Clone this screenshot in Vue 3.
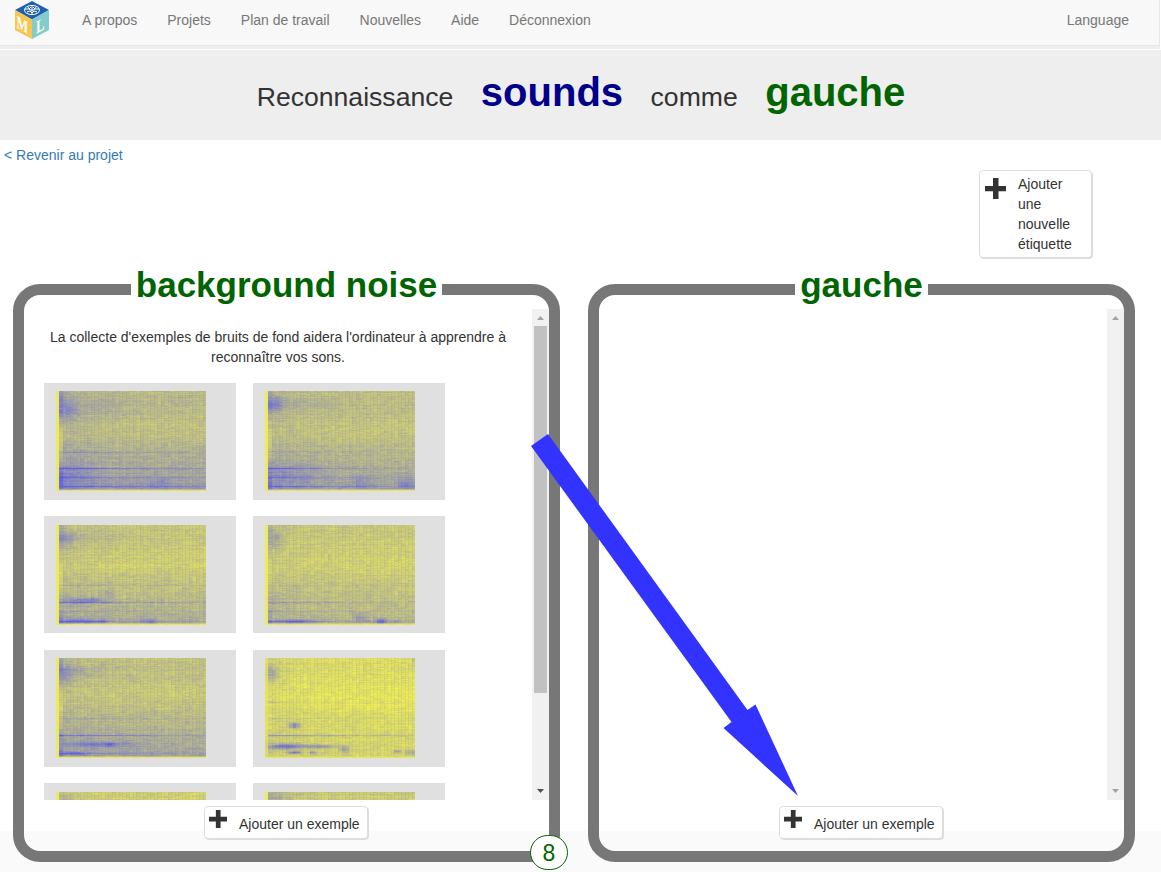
<script setup>
import { onMounted, ref } from 'vue'

const navItems = ['A propos', 'Projets', 'Plan de travail', 'Nouvelles', 'Aide', 'Déconnexion']

// lines: [row, strength, reach]; blobs: [x, y, radiusX, radiusY, strength]
const samples = [
  { seed: 11, base: 0.34, low: 0.24, edge: 0.5, lines: [[61, 0.17, 150], [77, 0.45, 110], [86, 0.22, 130], [95, 0.33, 200]], blobs: [[9, 17, 8, 12, 0.22], [30, 18, 42, 11, 0.08], [10, 85, 26, 12, 0.14], [103, 92, 9, 5, 0.16]] },
  { seed: 23, base: 0.31, low: 0.21, edge: 0.4, lines: [[60, 0.16, 100], [77, 0.43, 85], [86, 0.22, 70], [95, 0.34, 100]], blobs: [[8, 13, 8, 7, 0.32], [40, 13, 40, 6, 0.1], [20, 84, 30, 12, 0.12], [94, 91, 10, 6, 0.15], [139, 93, 10, 5, 0.22]] },
  { seed: 37, base: 0.25, low: 0.19, edge: 0.28, lines: [[60, 0.12, 150], [77, 0.3, 130], [86, 0.12, 80], [96, 0.3, 100]], blobs: [[8, 13, 8, 9, 0.2], [25, 12, 35, 5, 0.1], [28, 75, 22, 3, 0.34], [50, 68, 5, 3, 0.2], [22, 96, 18, 2.5, 0.3], [45, 96, 5, 2, 0.22], [93, 96, 7, 2.5, 0.32]] },
  { seed: 41, base: 0.23, low: 0.16, edge: 0.25, lines: [[60, 0.08, 110], [77, 0.28, 120], [86, 0.13, 80], [96, 0.25, 100]], blobs: [[8, 14, 7, 9, 0.17], [28, 96, 20, 2, 0.34], [93, 93, 7, 5, 0.2], [114, 96, 6, 3, 0.45], [130, 96, 5, 2, 0.2]] },
  { seed: 59, base: 0.29, low: 0.23, edge: 0.4, lines: [[60, 0.15, 160], [77, 0.38, 130], [95, 0.22, 100]], blobs: [[8, 15, 8, 9, 0.2], [20, 13, 30, 5, 0.1], [40, 86, 30, 2.5, 0.3], [52, 86, 5, 2, 0.22], [17, 95, 12, 2, 0.22]] },
  { seed: 67, base: 0.11, low: 0.07, edge: 0.1, lines: [[44, 0.16, 18], [60, 0.13, 70], [77, 0.36, 180]], blobs: [[6, 15, 6, 8, 0.28], [28, 67, 5, 3, 0.55], [18, 88, 16, 3, 0.6], [52, 88, 20, 2, 0.4], [28, 94, 6, 1.5, 0.55], [46, 94, 4, 1.5, 0.4], [78, 91, 4, 4, 0.35], [130, 93, 3, 1.5, 0.45], [144, 94, 6, 3, 0.3], [149, 1, 3, 7, 0.3]] },
  { seed: 73, base: 0.2, low: 0.2, edge: 0.25, lines: [], blobs: [[8, 8, 8, 6, 0.15]] },
  { seed: 89, base: 0.22, low: 0.2, edge: 0.28, lines: [], blobs: [[10, 5, 12, 6, 0.14]] }
]

const panels = [
  { name: 'background noise', hint: "La collecte d'exemples de bruits de fond aidera l'ordinateur à apprendre à reconnaître vos sons.", samples, count: 8 },
  { name: 'gauche', samples: [] }
]

const canvases = ref([])

function randomFrom(seed) {
  let s = seed * 7919
  return () => {
    s = (s + 0x6d2b79f5) | 0
    let t = Math.imul(s ^ (s >>> 15), 1 | s)
    t = (t + Math.imul(t ^ (t >>> 7), 61 | t)) ^ t
    return ((t ^ (t >>> 14)) >>> 0) / 4294967296
  }
}

function drawSpectrogram(canvas, s) {
  const ctx = canvas.getContext('2d')
  const rand = randomFrom(s.seed)
  const rowNoise = Array.from({ length: 100 }, () => rand() - 0.5)
  const columnDrift = new Array(100).fill(0)
  const cols = 43
  const w = 150 / cols
  for (let c = 0; c < cols; c++) {
    const x = c * w
    const left = Math.round(x)
    const width = Math.round(x + w) - left
    let vertical = 0
    for (let y = 0; y < 100; y++) {
      vertical = vertical * 0.6 + (rand() - 0.5) * 0.07
      columnDrift[y] = columnDrift[y] * 0.3 + (rand() - 0.5) * 0.1
      let v = s.base + columnDrift[y] + vertical + rowNoise[y] * 0.05
      v += s.low * Math.pow(y / 100, 3)
      v -= 0.06 * Math.exp(-(((y - 38) / 14) ** 2))
      v += 0.08 * Math.exp(-x / 35)
      if (c === 1) v += s.edge * 0.35 * Math.cos((y - 12) / 13)
      for (const [ly, amount, reach] of s.lines) {
        if (x > 3) v += amount * Math.exp(-x / reach) * Math.exp(-(((y - ly) / 0.75) ** 2))
      }
      for (const [bx, by, rx, ry, amount] of s.blobs) {
        v += amount * Math.exp(-(((x - bx) / rx) ** 2) - ((y - by) / ry) ** 2)
      }
      if (y > 98) v = 0.02 + rand() * 0.08
      else if (y === 98) v *= 0.6
      if (c === 0) v = s.seed === 67 ? v * 0.45 : 0.01
      v = Math.max(0, Math.min(0.94, v))
      const yellow = Math.round(238 - 153 * v)
      ctx.fillStyle = `rgb(${yellow},${yellow},${Math.round(86 + 156 * v)})`
      ctx.fillRect(left, y, width, 1)
    }
  }
  ctx.fillStyle = 'rgba(80,80,70,.07)'
  for (let c = 2; c < cols; c++) ctx.fillRect(Math.round(c * w), 0, 1, 98)
}

onMounted(() => canvases.value.forEach((canvas) => drawSpectrogram(canvas, samples[+canvas.dataset.index])))
</script>

<template>
  <div class="page">
    <nav class="navbar">
      <svg class="logo" viewBox="0 0 36 40">
        <path d="M18 1 35 10 18 19.500 1 10Z" fill="#1d62ab" />
        <path d="M1 10 18 19.500V39L1 30Z" fill="#f6c650" />
        <path d="M35 10 18 19.500V39L35 30Z" fill="#83cccb" />
        <g fill="none" stroke="#fff" stroke-width="1">
          <ellipse cx="18" cy="10" rx="7.500" ry="4.600" />
          <path d="M18 5.400v9.200M11 9h4l2-2m-4 5 3-1 2 2M25 9h-4l-2-2m4 5-3-1-2 2M14 7l2 3h4l2-3" />
        </g>
        <text class="letter" transform="matrix(.82 .46 0 1.200 2.600 27.600)">M</text>
        <text class="letter" transform="matrix(.86 -.48 0 1.200 22 33.800)">L</text>
      </svg>
      <a v-for="item in navItems" :key="item">{{ item }}</a>
      <a class="language">Language</a>
    </nav>

    <header class="banner">
      <span>Reconnaissance</span>
      <strong class="project">sounds</strong>
      <span>comme</span>
      <strong class="labels">gauche</strong>
    </header>

    <div class="toolbar">
      <a class="back">&lt; Revenir au projet</a>
      <button class="button new-label">
        <svg class="plus" viewBox="0 0 21 21"><path d="M8 0h5.500v8H21v5.300h-7.500V21H8v-7.700H0V8h8z" /></svg>
        <span>Ajouter une nouvelle étiquette</span>
      </button>
    </div>

    <main class="buckets">
      <section v-for="panel in panels" :key="panel.name" class="bucket">
        <h2>{{ panel.name }}</h2>
        <div class="scroller">
          <div class="content">
            <p v-if="panel.hint">{{ panel.hint }}</p>
            <div class="grid">
              <div v-for="(sample, i) in panel.samples" :key="i" class="tile">
                <canvas ref="canvases" :data-index="i" width="150" height="100"></canvas>
              </div>
            </div>
          </div>
          <div class="scrollbar" :class="{ active: panel.count }">
            <svg viewBox="0 0 17 17"><path d="M5 11h7L8.500 7z" fill="#a3a3a3" /></svg>
            <div class="track"><div v-if="panel.count" class="thumb"></div></div>
            <svg viewBox="0 0 17 17"><path class="down" d="M5 6h7L8.500 10z" /></svg>
          </div>
        </div>
        <button class="button add">
          <svg class="plus" viewBox="0 0 21 21"><path d="M8 0h5.500v8H21v5.300h-7.500V21H8v-7.700H0V8h8z" /></svg>
          <span>Ajouter un exemple</span>
        </button>
        <div v-if="panel.count" class="count">{{ panel.count }}</div>
      </section>
    </main>

    <div class="footer"></div>
    <svg class="arrow" viewBox="0 0 268 364">
      <path d="M17 0 0 12 200.500 288 192.500 294 267 362 224.500 270.500 216.500 276Z" fill="#3333ff" />
    </svg>
  </div>
</template>

<style>
body {
  margin: 0;
  overflow: hidden;
}
</style>

<style scoped>
* {
  box-sizing: border-box;
}
.page {
  position: relative;
  width: 1161px;
  height: 872px;
  overflow: hidden;
  background: #fff;
  color: #333;
  font: 14px/20px "Liberation Sans", Arial, sans-serif;
}
.navbar {
  display: flex;
  align-items: flex-start;
  width: 1160px;
  height: 46px;
  padding: 0 30px 0 14px;
  background: #f8f8f8;
  border-right: 1px solid #e7e7e7;
  border-bottom: 1px solid #e7e7e7;
  box-shadow: 0 3px #eee;
}
.navbar a {
  margin: 10px 30px 0 0;
  color: #777;
  white-space: nowrap;
}
.logo {
  width: 36px;
  height: 40px;
  margin-right: 32px;
}
.letter {
  fill: #fff;
  font: bold 15px "Liberation Serif", serif;
}
.navbar .language {
  margin-left: auto;
  margin-right: 0;
}
.banner {
  display: flex;
  justify-content: center;
  align-items: baseline;
  gap: 27.500px;
  height: 90px;
  margin-top: 4px;
  padding: 18px 0 0 1px;
  background: #eee;
  font-size: 26.600px;
  line-height: 48px;
}
.banner strong {
  font-size: 40px;
}
.project {
  color: #00008b;
}
.labels {
  color: #006400;
}
.toolbar {
  display: flex;
  justify-content: space-between;
  align-items: flex-start;
  height: 144px;
  padding: 5px 69px 0 4px;
}
.back {
  color: #337ab7;
}
.button {
  display: flex;
  background: #fff;
  border: 1px solid #ddd;
  border-radius: 4px;
  box-shadow: 1px 1px 0 #ddd;
  color: #333;
  font: inherit;
  text-align: left;
}
.plus {
  flex: none;
  fill: #333;
}
.new-label {
  width: 113px;
  height: 88px;
  margin-top: 25px;
  padding: 3px 18px 0 5px;
}
.new-label .plus {
  width: 21px;
  height: 21px;
  margin: 4px 12px 0 0;
}
.buckets {
  position: relative;
  z-index: 1;
  display: flex;
  gap: 28px;
  padding-left: 13px;
}
.bucket {
  position: relative;
  display: flex;
  flex-direction: column;
  align-items: center;
  width: 547px;
  height: 578px;
  border: 11px solid #777;
  border-radius: 27px;
}
h2 {
  height: 40px;
  margin: -26px 0 0;
  padding: 0 5px;
  background: #fff;
  color: #006400;
  font-size: 35px;
  line-height: 31px;
}
.scroller {
  display: flex;
  width: 525px;
  height: 491px;
  overflow: hidden;
}
.content {
  width: 508px;
  padding-left: 20px;
}
.content p {
  width: 468px;
  margin: 18px 0 16px;
  text-align: center;
}
.grid {
  display: grid;
  grid-template-columns: repeat(2, 192px);
  gap: 16.400px 17px;
}
.tile {
  height: 117px;
  padding: 8.400px 12px;
  background: #e0e0e0;
}
.tile canvas {
  display: block;
}
.scrollbar {
  display: flex;
  flex-direction: column;
  width: 17px;
  background: #f1f1f1;
}
.scrollbar svg {
  width: 17px;
  height: 17px;
}
.track {
  flex: 1;
  padding: 0 2px;
}
.thumb {
  height: 367px;
  background: #c1c1c1;
}
.down {
  fill: #a3a3a3;
}
.active .down {
  fill: #505050;
}
.add {
  width: 164px;
  height: 33px;
  margin: 6px 1px 0 0;
  padding: 7px 0 0 4px;
  white-space: nowrap;
}
.add .plus {
  width: 18px;
  height: 18px;
  margin: -4px 12px 0 0;
}
.count {
  position: absolute;
  right: -19px;
  bottom: -19px;
  width: 38px;
  height: 35px;
  border: 1px solid #006400;
  border-radius: 18px;
  background: #fff;
  color: #006400;
  font-size: 23px;
  line-height: 34px;
  text-align: center;
}
.footer {
  position: absolute;
  top: 831px;
  left: 0;
  width: 100%;
  height: 41px;
  background: #fafafa;
}
.arrow {
  position: absolute;
  z-index: 2;
  left: 531px;
  top: 434px;
  width: 268px;
  height: 364px;
}
</style>
